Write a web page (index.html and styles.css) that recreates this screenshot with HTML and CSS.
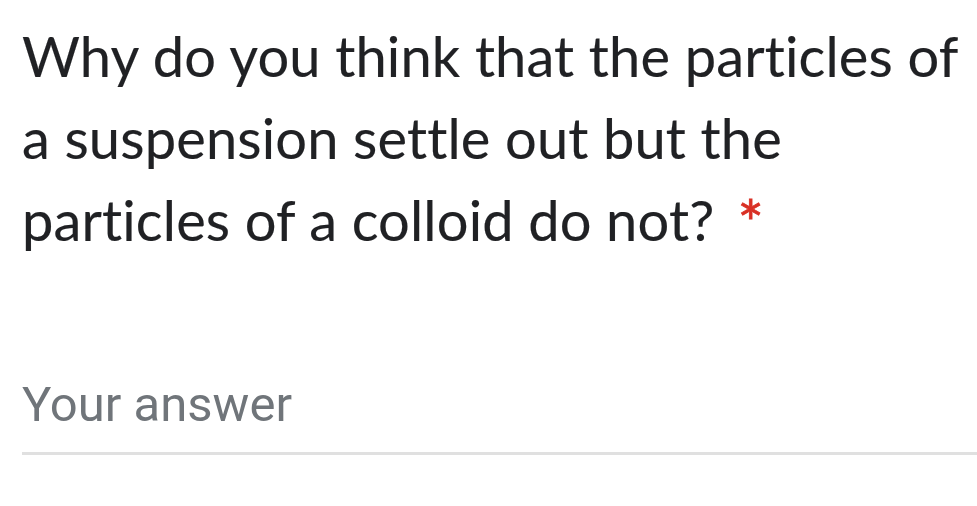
FILE: index.html
```html
<!DOCTYPE html>
<html>
<head>
<meta charset="utf-8">
<link rel="stylesheet" href="styles.css">
</head>
<body>
<div class="item">
  <div class="question">Why do you think that the particles of a suspension settle out but the particles of a colloid do not?<span class="req"> *</span></div>
  <div class="answer">
    <div class="placeholder">Your answer</div>
    <div class="line"></div>
  </div>
</div>
</body>
</html>
```
FILE: styles.css
```css
html, body { margin: 0; padding: 0; background: #fff; }
body { width: 977px; height: 506px; overflow: hidden; }
.item { padding: 15px 0 0 22px; }
.question {
  font-family: "Lato", "Open Sans", sans-serif;
  font-size: 56px;
  line-height: 82px;
  letter-spacing: 0.15px;
  color: #202124;
  width: 955px;
  font-variant-ligatures: none;
  -webkit-text-stroke: 0.15px #202124;
}
.req {
  color: #d93025;
  -webkit-text-stroke: 0.8px #d93025;
  margin-left: 7px;
  font-size: 62px;
  line-height: 0;
  vertical-align: -5px;
}
.answer { margin-top: 116px; }
.placeholder {
  font-family: Roboto, sans-serif;
  font-size: 49px;
  line-height: 56px;
  color: #70757a;
}
.line { height: 3px; background: #e0e0e0; margin-top: 19px; }
```
